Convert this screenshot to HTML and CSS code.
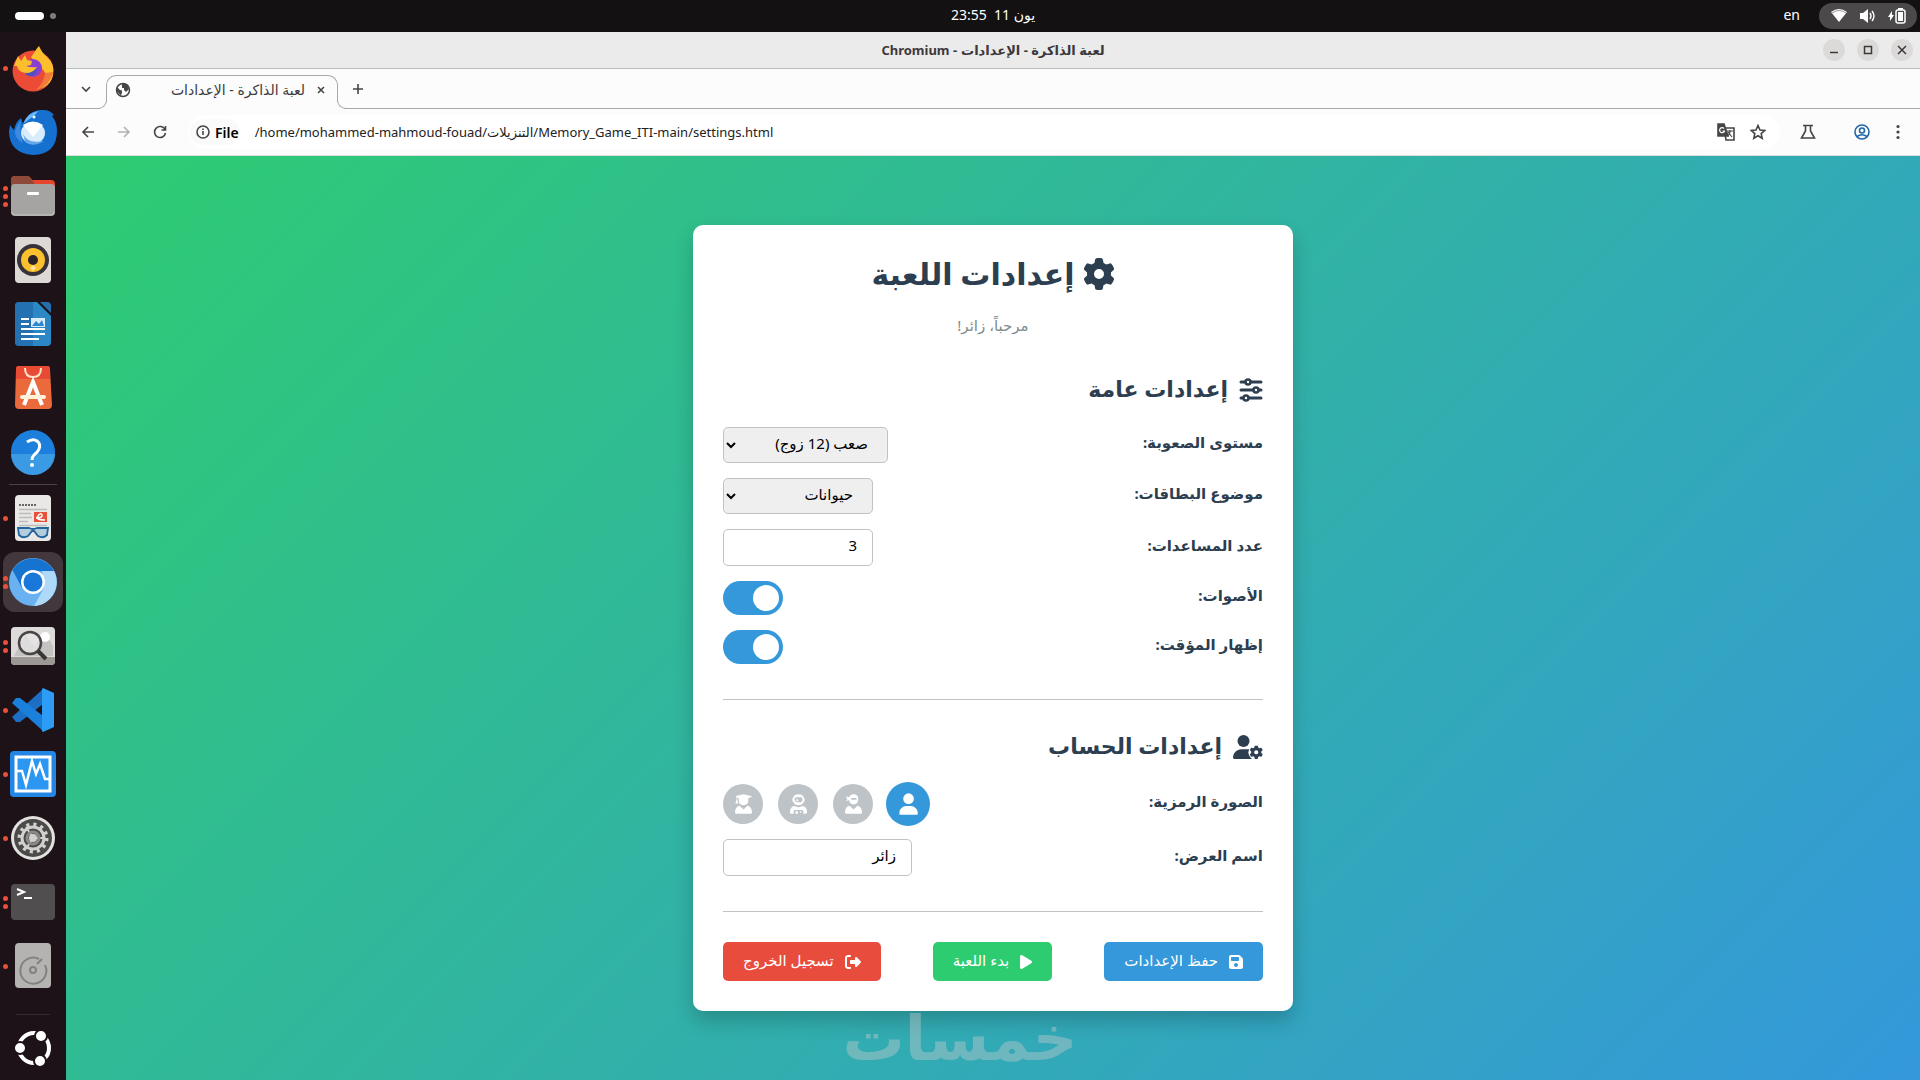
FILE: index.html
```html
<!DOCTYPE html>
<html lang="ar">
<head>
<meta charset="utf-8">
<title>لعبة الذاكرة - الإعدادات</title>
<link rel="stylesheet" href="styles.css">
</head>
<body>
<svg class="defs" aria-hidden="true">
  <symbol id="gear" viewBox="0 0 512 512"><path d="M495.9 166.6c3.2 8.7 .5 18.4-6.4 24.6l-43.3 39.4c1.1 8.3 1.7 16.8 1.7 25.4s-.6 17.1-1.7 25.4l43.3 39.4c6.9 6.2 9.6 15.9 6.4 24.6c-4.4 11.9-9.7 23.3-15.8 34.3l-4.7 8.1c-6.6 11-14 21.4-22.1 31.2c-5.9 7.2-15.7 9.6-24.5 6.8l-55.7-17.7c-13.4 10.3-28.2 18.9-44 25.4l-12.5 57.1c-2 9.1-9 16.3-18.2 17.8c-13.8 2.3-28 3.5-42.5 3.5s-28.7-1.2-42.5-3.5c-9.2-1.5-16.2-8.7-18.2-17.8l-12.5-57.1c-15.8-6.5-30.6-15.1-44-25.4L83.1 425.9c-8.8 2.8-18.6 .3-24.5-6.8c-8.1-9.8-15.5-20.2-22.1-31.2l-4.7-8.1c-6.1-11-11.4-22.4-15.8-34.3c-3.2-8.7-.5-18.4 6.4-24.6l43.3-39.4C64.6 273.1 64 264.6 64 256s.6-17.1 1.7-25.4L22.4 191.2c-6.9-6.2-9.6-15.9-6.4-24.6c4.4-11.9 9.7-23.3 15.8-34.3l4.7-8.1c6.6-11 14-21.4 22.1-31.2c5.9-7.2 15.7-9.6 24.5-6.8l55.7 17.7c13.4-10.3 28.2-18.9 44-25.4l12.5-57.1c2-9.1 9-16.3 18.2-17.8C227.3 1.2 241.5 0 256 0s28.7 1.2 42.5 3.5c9.2 1.5 16.2 8.7 18.2 17.8l12.5 57.1c15.8 6.5 30.6 15.1 44 25.4l55.7-17.7c8.8-2.8 18.6-.3 24.5 6.8c8.1 9.8 15.5 20.2 22.1 31.2l4.7 8.1c6.1 11 11.4 22.4 15.8 34.3zM256 336a80 80 0 1 0 0-160 80 80 0 1 0 0 160z"/></symbol>
</svg>

<header class="topbar">
  <div class="workspaces"><span class="ws-current"></span><span class="ws-other"></span></div>
  <time class="clock" dir="ltr">23:55 &nbsp;11 <bdi>يون</bdi></time>
  <div class="indicators">
    <span class="lang">en</span>
    <div class="status">
      <svg width="18" height="16" viewBox="0 0 18 16"><path d="M1 4Q9-2 17 4L9 14Z" fill="#fff"/><path d="M2 5Q9 0 16 5" fill="none" stroke="#999" stroke-width="1"/></svg>
      <svg width="18" height="16" viewBox="0 0 18 16"><path d="M1 5h3l5-4v14l-5-4H1z" fill="#fff"/><path d="M11 5q2 3 0 6M13 3q4 5 0 10" fill="none" stroke="#fff" stroke-width="1.4"/></svg>
      <svg width="18" height="16" viewBox="0 0 18 16"><path d="M4 3 0 9h2v4l4-6H4z" fill="#fff"/><rect x="8" y="2" width="9" height="13" rx="2" fill="none" stroke="#fff" stroke-width="1.5"/><path d="M10 4h5v9h-5zM10 0h5v2h-5z" fill="#fff"/></svg>
    </div>
  </div>
</header>

<div class="desktop">
  <nav class="dock" aria-label="Dock">
    <a href="#" class="app" aria-label="Firefox"><span class="dots"><i></i></span>
      <svg viewBox="0 0 48 48"><circle cx="24" cy="27" r="20.500" fill="#ec4b36"/><path d="M22 13C25 10 26 6 30 2q3 7 8 11 8 7 6 17c-1 8-6 12-11 14 2-4 5-8 4-13q-2-6-8-9z" fill="#fbbf2d"/><path d="M44 28c-2 9-8 16-17 18 6-6 8-10 9-17z" fill="#f07b3c"/><circle cx="24" cy="24" r="9" fill="#8a3fd1"/><path d="M15 25h13q-2 8-8 7-4-1-5-7z" fill="#4b53b9"/><path d="M5 22 9 12l3 5 4-6 2 5 5 1-1 4-5 1q6 2 11 1-4 6-11 6-8-1-9-7z" fill="#fbbf2d"/></svg></a>
    <a href="#" class="app" aria-label="Thunderbird"><span class="dots"></span>
      <svg viewBox="0 0 48 48"><path d="M1 17q2 3 4 5 2-9 7-12l2 6Q20 1 34 2q7 0 11 5l-2 1q5 6 5 15 0 23-24 24Q0 45 0 23z" fill="#1570cf"/><path d="M6 24q1-6 6-12-2 14 2 23-8-4-8-11z" fill="#3c8be0"/><path d="M14 16Q19 4 30 3q-2 1-4 4l-8 6z" fill="#6cb7f5"/><ellipse cx="24" cy="25" rx="12" ry="11" fill="#d9ecfb"/><path d="M14 17l10 12 10-12q-10-7-20 0z" fill="#fff"/><path d="M13 21q2 16 22 12-11 7-19 1z" fill="#64a8e8"/><circle cx="25" cy="9" r="1.500" fill="#fff"/></svg></a>
    <a href="#" class="app" aria-label="Files"><span class="dots"><i></i><i></i><i></i></span>
      <svg viewBox="0 0 48 48"><path d="M2 14V8q0-4 4-4h12q3 0 5 4h19q4 0 4 4v6z" fill="#e8452f"/><path d="M2 14V8q0-4 4-4h12q3 0 5 4l4 6z" fill="#8d4a3a"/><rect x="2" y="12" width="44" height="32" rx="4" fill="#a5a4a3"/><path d="M3 40q0 3 3 3h36q3 0 3-3" fill="none" stroke="#c4c3c2"/><rect x="18" y="20" width="12" height="3" rx="1" fill="#fff"/></svg></a>
    <a href="#" class="app" aria-label="Rhythmbox"><span class="dots"></span>
      <svg viewBox="0 0 48 48"><rect x="6" y="1" width="36" height="46" rx="4" fill="#dddad6"/><circle cx="24" cy="24" r="16" fill="#38333a"/><circle cx="24" cy="24" r="12" fill="#fbc02d"/><circle cx="24" cy="24" r="5" fill="#2b2328"/><path d="m24 29 3 3-3 3-3-3z" fill="#ffe29a"/></svg></a>
    <a href="#" class="app" aria-label="LibreOffice Writer"><span class="dots"></span>
      <svg viewBox="0 0 48 48"><path d="M10 2h18l14 14v26q0 4-4 4H10q-4 0-4-4V6q0-4 4-4z" fill="#2b88c4"/><path d="M10 2h14v44H10q-4 0-4-4V6q0-4 4-4z" fill="#1f62a5" opacity=".6"/><path d="M31 2h7q4 0 4 4v7z" fill="#2570ac"/><path d="M12 19h8M12 24h8M12 29h24M12 34h24M12 39h18" stroke="#fff" stroke-width="2"/><rect x="22" y="18" width="14" height="9" fill="#d8ecfb"/><path d="M23 26l4-5 3 3 3-4 2 6z" fill="#2c86d1"/></svg></a>
    <a href="#" class="app" aria-label="App Center"><span class="dots"></span>
      <svg viewBox="0 0 48 48"><path d="M10 2h28q3 0 3 3l2 36q0 4-4 4H10q-4 0-4-4L7 5q0-3 3-3z" fill="#ea6a3c"/><path d="M10 2h28q3 0 3 3v10H7V5q0-3 3-3z" fill="#e94a34"/><path d="M16 4q0 9 8 9t8-9" fill="none" stroke="#ffe4c8" stroke-width="2"/><path d="M15 41 24 18l9 23" fill="none" stroke="#fff" stroke-width="4"/><rect x="11" y="31" width="26" height="4" rx="2" fill="#fff0d8"/></svg></a>
    <a href="#" class="app" aria-label="Help"><span class="dots"></span>
      <svg viewBox="0 0 48 48"><circle cx="24" cy="24" r="22" fill="#1d7fdc"/><path d="M2 26a22 21 0 0 0 44 0z" fill="#3a9be4"/><path d="M18 14q6-4 10-1t2 8q-1 3-5 6-2 2-2 5" fill="none" stroke="#fff" stroke-width="3"/><circle cx="23" cy="37" r="2" fill="#fff"/></svg></a>
    <hr class="dock-sep">
    <a href="#" class="app" aria-label="Document Viewer"><span class="dots"><i></i></span>
      <svg viewBox="0 0 48 48"><rect x="6" y="1" width="36" height="46" rx="4" fill="#e9e8e6"/><path d="M10 11h18" stroke="#666" stroke-width="2" stroke-dasharray="2 1"/><path d="M10 19.500h12M10 23.500h13M10 27.500h9M10 31.500h28M10 15.500h28" stroke="#bbb" stroke-width="1.500"/><rect x="25" y="18" width="13" height="10" fill="#e9503a"/><path d="M27 24q7 0 6-3t-4 1 7 4" fill="none" stroke="#fff" stroke-width="1.500"/><path d="M9 34h11q2 1 4 1t4-1h11l-1 7q-4 4-9 1l-4-5h-2l-4 5q-5 3-9-1z" fill="#b4cddd" stroke="#22649b" stroke-width="1.800"/></svg></a>
    <a href="#" class="app is-active" aria-label="Chromium"><span class="dots"><i></i><i></i></span>
      <svg viewBox="0 0 48 48"><circle cx="24" cy="24" r="24" fill="#6ab1f1"/><path d="M3.500 12A24 24 0 0 1 45 13H24L13 30z" fill="#1673cf"/><path d="M45 13A24 24 0 0 1 25 48l10-18-2-17z" fill="#afd9f8"/><circle cx="24" cy="24" r="12" fill="#fff"/><circle cx="24" cy="24" r="9.500" fill="#1978d9"/></svg></a>
    <a href="#" class="app" aria-label="Image Viewer"><span class="dots"><i></i><i></i></span>
      <svg viewBox="0 0 48 48"><rect x="2" y="5" width="44" height="38" rx="4" fill="#dcdbd9"/><path d="M2 35h44v4q0 4-4 4H6q-4 0-4-4z" fill="#9c9894"/><path d="M5 34 17 12l9 14 9-17 9 15v10z" fill="#c4c3c2"/><circle cx="36" cy="15" r="5" fill="#fff"/><circle cx="21" cy="21" r="11" fill="#e8e8e8" fill-opacity=".7" stroke="#4a4444" stroke-width="2.500"/><path d="m29 29 8 8" stroke="#3c3535" stroke-width="4"/></svg></a>
    <a href="#" class="app" aria-label="Visual Studio Code"><span class="dots"><i></i></span>
      <svg viewBox="0 0 48 48"><path d="M34 3 3 31l4 5 4 0 23-18z" fill="#1c6fc4"/><path d="M34 45 3 17l4-5h4l23 18z" fill="#1b80dc"/><path d="m33 3 1-1 11 5v34l-11 5-1-1z" fill="#2c9cf5"/></svg></a>
    <a href="#" class="app" aria-label="System Monitor"><span class="dots"><i></i></span>
      <svg viewBox="0 0 48 48"><rect x="1" y="1" width="46" height="46" rx="4" fill="#2385e4"/><rect x="7" y="7" width="34" height="34" fill="#2c97f2" stroke="#fff" stroke-width="3"/><path d="M8 21h5l4 14 6-24 4 13 4-10 5 15h5" fill="none" stroke="#fff" stroke-width="2.500"/></svg></a>
    <a href="#" class="app" aria-label="Settings"><span class="dots"><i></i></span>
      <svg viewBox="0 0 48 48"><circle cx="24" cy="24" r="22" fill="#e4e2e0"/><circle cx="24" cy="24" r="19" fill="#4c4a49"/><circle cx="24" cy="24" r="13" fill="none" stroke="#d2d0ce" stroke-width="5" stroke-dasharray="3 3.800"/><circle cx="24" cy="24" r="11" fill="none" stroke="#d2d0ce" stroke-width="3"/><path d="M24 24 17 13M24 24h12M24 24 17 35" stroke="#d2d0ce" stroke-width="2"/><circle cx="24" cy="24" r="6" fill="none" stroke="#8b8988" stroke-width="3"/><circle cx="24" cy="24" r="4" fill="#d2d0ce"/></svg></a>
    <a href="#" class="app" aria-label="Terminal"><span class="dots"><i></i><i></i></span>
      <svg viewBox="0 0 48 48"><rect x="2" y="6" width="44" height="36" rx="4" fill="#504e4f"/><path d="m8 11 7 3-7 3M15 20h8" fill="none" stroke="#fff" stroke-width="2"/></svg></a>
    <a href="#" class="app" aria-label="Disks"><span class="dots"><i></i></span>
      <svg viewBox="0 0 48 48"><rect x="6" y="1" width="36" height="45" rx="4" fill="#b4b3b1"/><path d="M30 17a13 13 0 1 0 6 6M28 22l5-5" fill="none" stroke="#84807d" stroke-width="2"/><circle cx="24" cy="28" r="3" fill="none" stroke="#84807d" stroke-width="2"/></svg></a>
    <hr class="dock-sep dock-sep-end">
    <a href="#" class="app" aria-label="Show Applications"><span class="dots"></span>
      <svg viewBox="0 0 48 48"><circle cx="25" cy="24" r="15" fill="none" stroke="#fff" stroke-width="4"/><g fill="#fff" stroke="#1c1217" stroke-width="2"><circle cx="11" cy="24" r="6"/><circle cx="32" cy="12" r="6"/><circle cx="31" cy="37" r="6"/></g></svg></a>
  </nav>

  <div class="window">
    <div class="titlebar">
      <span class="window-title"><bdi dir="rtl">لعبة الذاكرة - الإعدادات</bdi></span>
      <span class="window-title" dir="ltr">Chromium -</span>
      <div class="window-buttons">
        <button aria-label="Minimize"><svg width="10" height="10" viewBox="0 0 10 10"><path d="M1 7.500h8"/></svg></button>
        <button aria-label="Maximize"><svg width="10" height="10" viewBox="0 0 10 10"><path d="M1.500 1.500h7v7h-7z"/></svg></button>
        <button aria-label="Close"><svg width="10" height="10" viewBox="0 0 10 10"><path d="m1 1 8 8m0-8-8 8"/></svg></button>
      </div>
    </div>

    <div class="tabstrip">
      <button class="icon-btn tab-search" aria-label="Search tabs"><svg width="10" height="10" viewBox="0 0 10 10"><path d="m1 3 4 4 4-4"/></svg></button>
      <div class="tab">
        <svg class="globe" width="16" height="16" viewBox="0 0 16 16"><circle cx="8" cy="8" r="6.500" fill="none" stroke="#474447" stroke-width="1.500"/><path d="M2 5l3 3 2 .5v2l-1 3-4-4zM7 2h5l2 5-3 3-2-2V6H7z" fill="#474447"/></svg>
        <span class="tab-title" dir="rtl">لعبة الذاكرة - الإعدادات</span>
        <button class="icon-btn" aria-label="Close tab"><svg width="8" height="8" viewBox="0 0 8 8"><path d="m1 1 6 6m0-6-6 6"/></svg></button>
      </div>
      <button class="icon-btn new-tab" aria-label="New tab"><svg width="12" height="12" viewBox="0 0 12 12"><path d="M6 1v10M1 6h10"/></svg></button>
    </div>

    <div class="toolbar">
      <button class="icon-btn" aria-label="Back"><svg width="14" height="14" viewBox="0 0 14 14"><path d="M13 7H2m5-5L2 7l5 5"/></svg></button>
      <button class="icon-btn is-disabled" aria-label="Forward"><svg width="14" height="14" viewBox="0 0 14 14"><path d="M1 7h11M7 2l5 5-5 5"/></svg></button>
      <button class="icon-btn" aria-label="Reload"><svg width="14" height="14" viewBox="0 0 14 14"><path d="M12 4.500A5.500 5.500 0 1 0 12.500 8M12.500 1v4h-4"/></svg></button>
      <div class="omnibox" dir="ltr">
        <button class="chip"><svg width="14" height="14" viewBox="0 0 14 14"><circle cx="7" cy="7" r="6"/><path d="M7 6v4M7 3.500v1.500"/></svg>File</button>
        <span class="url">/home/mohammed-mahmoud-fouad/<bdi>التنزيلات</bdi>/Memory_Game_ITI-main/settings.html</span>
        <button class="icon-btn" aria-label="Translate"><svg width="18" height="18" viewBox="0 0 18 18"><path d="M7 5h10v12H9z"/><path d="M1 1h6l4 12H1z" fill="#474447"/><path d="M7 5.500A2.500 2.500 0 1 0 7.500 8H5.500" stroke="#fff" stroke-width="1.200"/><path d="M10 8h6M13 7v1q0 4-3 5M11 9l4 5" stroke-width="1.200"/></svg></button>
        <button class="icon-btn" aria-label="Bookmark"><svg width="16" height="16" viewBox="0 0 16 16"><path d="m8 1.500 2 4.500 4.800.4-3.600 3.200 1 4.700L8 11.800l-4.200 2.500 1-4.700L1.200 6.400 6 6z"/></svg></button>
      </div>
      <button class="icon-btn" aria-label="Labs"><svg width="16" height="16" viewBox="0 0 16 16"><path d="M3 1.500h10M5.500 2v5L1.500 14h13l-4-7V2"/></svg></button>
      <button class="icon-btn profile" aria-label="Profile"><svg width="16" height="16" viewBox="0 0 16 16"><circle cx="8" cy="8" r="7"/><circle cx="8" cy="6.500" r="2.500"/><path d="M3 12.500q5-3.500 10 0"/></svg></button>
      <button class="icon-btn" aria-label="Menu"><svg width="4" height="16" viewBox="0 0 4 16"><g fill="#474447" stroke="none"><circle cx="2" cy="2.500" r="1.600"/><circle cx="2" cy="8" r="1.600"/><circle cx="2" cy="13.500" r="1.600"/></g></svg></button>
    </div>

    <main class="page" dir="rtl">
      <form class="card">
        <h1><svg class="ico" width="32" height="32"><use href="#gear"/></svg>إعدادات اللعبة</h1>
        <p class="welcome">مرحباً، زائر!</p>

        <section class="group">
          <h2><svg class="ico" width="24" height="24" viewBox="0 0 24 24"><g fill="none" stroke="#2c3e50" stroke-width="3" stroke-linecap="round"><path d="M2 4h4M12 4h10M2 12h12M20 12h2M2 20h2M10 20h12"/><circle cx="9" cy="4" r="2.500" stroke-width="2.500"/><circle cx="17" cy="12" r="2.500" stroke-width="2.500"/><circle cx="7" cy="20" r="2.500" stroke-width="2.500"/></g></svg>إعدادات عامة</h2>
          <div class="row"><label for="difficulty">مستوى الصعوبة:</label>
            <select id="difficulty" class="field field-auto"><option>صعب (12 زوج)</option></select></div>
          <div class="row"><label for="theme">موضوع البطاقات:</label>
            <select id="theme" class="field"><option>حيوانات</option></select></div>
          <div class="row"><label for="hints">عدد المساعدات:</label>
            <input id="hints" class="field" type="number" value="3"></div>
          <div class="row"><label for="sound">الأصوات:</label>
            <input id="sound" class="switch" type="checkbox" checked></div>
          <div class="row"><label for="timer">إظهار المؤقت:</label>
            <input id="timer" class="switch" type="checkbox" checked></div>
        </section>

        <section class="group">
          <h2><svg class="ico" width="30" height="24" viewBox="0 0 640 512"><circle cx="224" cy="128" r="128"/><path d="M178 304C80 304 0 384 0 482c0 17 13 30 30 30h400V304z"/><circle cx="496" cy="368" r="168" fill="#fff"/><use href="#gear" x="352" y="224" width="288" height="288"/></svg>إعدادات الحساب</h2>
          <div class="row"><span class="label" id="avatar-label">الصورة الرمزية:</span>
            <div class="avatars" role="group" aria-labelledby="avatar-label">
              <button type="button" class="avatar is-selected" aria-label="User"><svg width="17" height="20" viewBox="0 0 448 512"><circle cx="224" cy="128" r="128"/><path d="M178.300 304C79.800 304 0 383.800 0 482.300C0 498.700 13.300 512 29.700 512H418.300c16.400 0 29.700-13.300 29.700-29.700C448 383.800 368.200 304 269.700 304H178.300z"/></svg></button>
              <button type="button" class="avatar" aria-label="Ninja"><svg width="17" height="20" viewBox="0 0 448 512"><path d="M110 85Q75 50 32 56q5 45 33 65-28 14-35 50 45 3 77-20 15 115 117 115 124 0 124-133T224 0Q140 0 110 85zM186 96h92q32 0 32 24t-32 24H180q-26 0-26-24t32-24z" fill-rule="evenodd"/><path d="M120 300 224 400 328 300q120 30 120 180 0 32-32 32H32q-32 0-32-32 0-150 120-180z"/></svg></button>
              <button type="button" class="avatar" aria-label="Astronaut"><svg width="17" height="20" viewBox="0 0 448 512"><path d="M224 0q120 0 140 96h20v96h-20q-30 96-140 96T84 192H64V96h20Q104 0 224 0zM176 80q-56 0-56 56t56 72h96q56 0 56-72t-56-56z" fill-rule="evenodd"/><path d="m190 112 14 28 28 14-28 14-14 28-14-28-28-14 28-14z"/><path d="M110 310q114 60 228 0 110 30 110 150 0 52-32 52h-64v-64q0-32-32-32H128q-32 0-32 32v64H32q-32 0-32-52 0-120 110-150zM144 448h64v64h-64zM260 448h40v40h-40z"/></svg></button>
              <button type="button" class="avatar" aria-label="Graduate"><svg width="17" height="20" viewBox="0 0 448 512"><path d="M20 48 224 0l204 48q25 16 0 32l-76 20v60q0 128-128 128T96 160v-60L56 90v40l30 110H10l30-110V84z"/><path d="M120 300 224 400 328 300q120 30 120 180 0 32-32 32H32q-32 0-32-32 0-150 120-180z"/></svg></button>
            </div></div>
          <div class="row"><label for="display-name">اسم العرض:</label>
            <input id="display-name" class="field field-wide" type="text" value="زائر"></div>
        </section>

        <div class="actions">
          <button type="button" class="btn btn-save"><svg class="ico" width="14" height="16" viewBox="0 0 448 512"><path fill-rule="evenodd" d="M64 32C28.700 32 0 60.700 0 96V416c0 35.300 28.700 64 64 64H384c35.300 0 64-28.700 64-64V173.300c0-17-6.700-33.300-18.700-45.300L352 50.700C340 38.700 323.700 32 306.700 32H64zm0 96c0-17.700 14.300-32 32-32H288c17.700 0 32 14.300 32 32v64c0 17.700-14.300 32-32 32H96c-17.700 0-32-14.300-32-32V128zM224 288a64 64 0 1 1 0 128 64 64 0 1 1 0-128z"/></svg>حفظ الإعدادات</button>
          <button type="button" class="btn btn-play"><svg class="ico" width="12" height="16" viewBox="0 0 384 512"><path d="M73 39c-14.800-9.100-33.400-9.400-48.500-.9S0 62.600 0 80V432c0 17.400 9.400 33.400 24.500 41.900s33.700 8.100 48.500-.9L361 297c14.300-8.700 23-24.200 23-41s-8.700-32.200-23-41L73 39z"/></svg>بدء اللعبة</button>
          <button type="button" class="btn btn-logout"><svg class="ico" width="16" height="16" viewBox="0 0 512 512"><path d="M377.900 105.900L500.700 228.700c7.200 7.200 11.300 17.100 11.300 27.300s-4.100 20.100-11.300 27.300L377.900 406.100c-6.400 6.400-15 9.900-24 9.900c-18.700 0-33.900-15.200-33.900-33.900l0-62.100-128 0c-17.700 0-32-14.300-32-32l0-64c0-17.700 14.300-32 32-32l128 0 0-62.100c0-18.700 15.200-33.900 33.900-33.900c9 0 17.600 3.600 24 9.900zM160 96L96 96c-17.700 0-32 14.300-32 32l0 256c0 17.700 14.300 32 32 32l64 0c17.700 0 32 14.300 32 32s-14.300 32-32 32l-64 0c-53 0-96-43-96-96L0 128C0 75 43 32 96 32l64 0c17.700 0 32 14.300 32 32s-14.300 32-32 32z"/></svg>تسجيل الخروج</button>
        </div>
      </form>
    </main>
  </div>
</div>
<div class="watermark" dir="rtl">خمسات</div>
</body>
</html>
```
FILE: styles.css
```css
* { box-sizing: border-box; }

body {
  margin: 0;
  min-height: 100vh;
  display: flex;
  flex-direction: column;
  position: relative;
  background: #1c1217;
  font-family: "Noto Sans", "DejaVu Sans", sans-serif;
  font-size: 14px;
}

button, input, select { font: inherit; }
.defs { position: absolute; width: 0; height: 0; }

/* Top bar */
.topbar {
  height: 32px;
  display: grid;
  grid-template-columns: 1fr auto 1fr;
  align-items: center;
  background: #131112;
  color: #fff;
}
.workspaces { display: flex; align-items: center; gap: 6px; padding-left: 15px; }
.ws-current { width: 29px; height: 8px; border-radius: 4px; background: #fff; }
.ws-other { width: 6px; height: 6px; border-radius: 50%; background: #807d7e; }
.clock { padding-left: 66px; line-height: 20px; padding-bottom: 2px; }
.indicators { display: flex; justify-content: flex-end; align-items: center; gap: 19px; padding-right: 3px; }
.lang { line-height: 20px; padding-bottom: 2px; }
.status {
  display: flex;
  align-items: center;
  gap: 11px;
  height: 26px;
  padding: 0 11px;
  border-radius: 13px;
  background: #4b494a;
}

/* Dock */
.desktop { flex: 1; display: flex; }
.dock {
  width: 66px;
  flex: none;
  display: flex;
  flex-direction: column;
  padding-top: 4px;
  background: #1c1217;
}
.app { display: flex; align-items: center; height: 64px; position: relative; }
.app > svg { width: 48px; height: 48px; position: relative; }
.dots { width: 9px; flex: none; display: flex; flex-direction: column; align-items: flex-end; gap: 3px; padding-right: 1px; position: relative; z-index: 1; }
.dots i { width: 5px; height: 5px; border-radius: 50%; background: #e9503a; }
.is-active::before {
  content: "";
  position: absolute;
  inset: 2px 3px;
  border-radius: 12px;
  background: #41373c;
}
.dock-sep { width: 48px; height: 1px; margin: 0 0 1px 9px; border: 0; background: #4a4045; }
.dock-sep-end { width: 34px; margin: auto 0 1px 16px; background: #33292e; }

/* Browser window */
.window { flex: 1; min-width: 0; display: flex; flex-direction: column; background: #fcfcfc; }
.titlebar {
  height: 37px;
  display: flex;
  flex-direction: row-reverse;
  justify-content: center;
  align-items: center;
  gap: 4px;
  position: relative;
  border-bottom: 1px solid #b9bbc0;
  background: #ebebeb;
  color: #3d383b;
  font-size: 13px;
  font-weight: 700;
}
.window-buttons { position: absolute; right: 7px; display: flex; gap: 12px; }
.window-buttons button {
  width: 22px;
  height: 22px;
  padding: 0;
  display: grid;
  place-items: center;
  border: 0;
  border-radius: 50%;
  background: #dbdad9;
}
.window-buttons path { fill: none; stroke: #3d383b; stroke-width: 1.5; }

.icon-btn { display: grid; place-items: center; padding: 0; border: 0; background: none; min-width: 16px; }
.icon-btn svg, .chip svg { fill: none; stroke: #474447; stroke-width: 1.6; }

.tabstrip { height: 40px; display: flex; align-items: flex-end; }
.tab-search { width: 40px; height: 40px; border-bottom: 1px solid #a8a8aa; }
.tab {
  width: 232px;
  height: 34px;
  display: flex;
  align-items: center;
  gap: 8px;
  padding: 0 8px 6px;
  position: relative;
  border: 1px solid #a8a8aa;
  border-bottom: 0;
  border-radius: 10px 10px 0 0;
}
.tab::before, .tab::after {
  content: "";
  position: absolute;
  bottom: 0;
  width: 9px;
  height: 9px;
  border: 1px solid #a8a8aa;
  border-top: 0;
  background: #fcfcfc;
}
.tab::before { right: 100%; border-left: 0; border-radius: 0 0 9px 0; box-shadow: 3px 3px 0 #fcfcfc; }
.tab::after { left: 100%; border-right: 0; border-radius: 0 0 0 9px; box-shadow: -3px 3px 0 #fcfcfc; }
.tab-title { flex: 1; color: #3d3a3c; }
.new-tab { flex: 1; height: 40px; justify-items: start; padding-left: 14px; border-bottom: 1px solid #a8a8aa; }

.toolbar { height: 47px; display: flex; align-items: center; gap: 20px; padding: 0 14px; border-bottom: 1px solid #dedede; }
.is-disabled { opacity: .4; }
.omnibox { flex: 1; height: 34px; display: flex; align-items: center; gap: 15px; padding: 0 14px 0 2px; border-radius: 17px; background: #fff; }
.chip { display: flex; align-items: center; gap: 5px; height: 26px; padding: 0 1px 0 6px; border: 0; border-radius: 13px; background: #fafafa; font-weight: 600; }
.url { flex: 1; color: #222; font-size: 13px; }
.profile { margin-left: 18px; }
.profile svg { stroke: #2166a5; }

/* Settings page */
.page {
  flex: 1;
  display: flex;
  justify-content: center;
  align-items: center;
  background: linear-gradient(135deg, #2ecc71, #3498db);
  color: #2c3e50;
}
.card {
  width: 600px;
  max-width: 100%;
  padding: 30px;
  border-radius: 10px;
  background: #fff;
  box-shadow: 0 10px 20px rgba(0, 0, 0, .2);
  font-size: 15px;
}
.ico { fill: #2c3e50; flex: none; }
h1 { display: flex; justify-content: center; align-items: center; gap: 8px; margin: 0 0 20px; font-size: 30px; line-height: 38px; }
.welcome { margin: 0 0 36px; text-align: center; color: #7f8c8d; font-size: 15px; line-height: 24px; }
.group { margin-bottom: 30px; padding-bottom: 35px; border-bottom: 1px solid #bdc3c7; }
h2 { display: flex; align-items: center; gap: 11px; margin: 0 0 24px; font-size: 22px; line-height: 30px; }
h2 .ico, .btn .ico { margin-top: 4px; }
.row { display: flex; justify-content: space-between; align-items: center; margin-bottom: 15px; }
.row:last-child { margin-bottom: 0; }
.row label, .label { font-weight: 700; line-height: 20px; padding-bottom: 6px; }
.field {
  width: 150px;
  height: 37px;
  padding: 0 15px 5px;
  border: 1px solid #bdc3c7;
  border-radius: 5px;
  color: #000;
}
select.field { height: 36px; padding-bottom: 4px; background: #efefef; }
.field-auto { width: 165px; }
.field-wide { width: 189px; }
.switch {
  appearance: none;
  width: 60px;
  height: 34px;
  margin: 0;
  padding: 4px;
  display: flex;
  border-radius: 17px;
  background: #3498db;
}
.switch::before { content: ""; width: 26px; height: 26px; border-radius: 50%; background: #fff; }
.avatars { display: flex; gap: 15px; }
.avatar { width: 40px; height: 40px; padding: 0; display: grid; place-items: center; border: 0; border-radius: 50%; background: #bdc3c7; }
.avatar svg { fill: #fff; }
.avatar.is-selected { background: #3498db; transform: scale(1.1); }

.actions { display: flex; justify-content: space-between; }
.btn { height: 39px; display: flex; align-items: center; justify-content: center; gap: 11px; padding: 0 20px 3px; border: 0; border-radius: 5px; color: #fff; }
.btn .ico { fill: #fff; }
.btn-save { background: #3498db; }
.btn-play { background: #2ecc71; }
.btn-logout { background: #e74c3c; }

.watermark {
  position: absolute;
  bottom: 8px;
  left: 50%;
  transform: translateX(-50%);
  color: #ccc;
  opacity: .4;
  font-size: 62px;
  font-weight: 700;
  line-height: 72px;
  pointer-events: none;
}
```
